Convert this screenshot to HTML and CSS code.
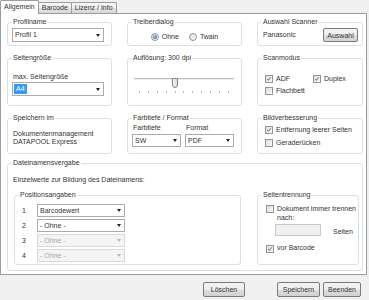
FILE: index.html
```html
<!DOCTYPE html>
<html>
<head>
    <title>Allgemein</title>
<link rel="stylesheet" href="styles.css">
</head>
<body>
<div class="window">
    <div class="tabs">
        <div class="tab active">Allgemein</div>
        <div class="tab">Barcode</div>
        <div class="tab">Lizenz / Info</div>
    </div>

    <div class="page">
        <div class="grid">
            <fieldset class="grp">
                <legend>Profilname</legend>
                <div class="combo wide"><span>Profil 1</span><i class="arrow"></i></div>
            </fieldset>

            <fieldset class="grp">
                <legend>Treiberdialog</legend>
                <div class="radios">
                    <span class="opt"><span class="rb on"></span>Ohne</span>
                    <span class="opt"><span class="rb"></span>Twain</span>
                </div>
            </fieldset>

            <fieldset class="grp">
                <legend>Auswahl Scanner</legend>
                <div class="scanner">
                    <span>Panasonic</span>
                    <button class="btn select">Auswahl</button>
                </div>
            </fieldset>

            <fieldset class="grp">
                <legend>Seitengröße</legend>
                <div class="label size-label">max. Seitengröße</div>
                <div class="combo wide"><span class="selected">A4</span><i class="arrow"></i></div>
            </fieldset>

            <fieldset class="grp">
                <legend>Auflösung: 300 dpi</legend>
                <div class="slider">
                    <div class="track"></div>
                    <div class="thumb"></div>
                </div>
                <div class="ticks">
                    <i></i><i></i><i></i><i></i><i></i><i></i><i></i><i></i><i></i><i></i><i></i>
                </div>
            </fieldset>

            <fieldset class="grp">
                <legend>Scanmodus</legend>
                <div class="checks">
                    <div class="check-row">
                        <span class="opt first"><span class="cb on"><svg viewBox="0 0 8 8"><path d="M1.6 4.1 3.2 5.8 6.4 1.8"/></svg></span>ADF</span>
                        <span class="opt"><span class="cb on"><svg viewBox="0 0 8 8"><path d="M1.6 4.1 3.2 5.8 6.4 1.8"/></svg></span>Duplex</span>
                    </div>
                    <div class="check-row">
                        <span class="opt"><span class="cb"></span>Flachbett</span>
                    </div>
                </div>
            </fieldset>

            <fieldset class="grp">
                <legend>Speichern im</legend>
                <div class="store">Dokumentenmanagement<br>DATAPOOL Express</div>
            </fieldset>

            <fieldset class="grp">
                <legend>Farbtiefe / Format</legend>
                <div class="format">
                    <div>
                        <div class="label">Farbtiefe</div>
                        <div class="combo half"><span>SW</span><i class="arrow"></i></div>
                    </div>
                    <div>
                        <div class="label">Format</div>
                        <div class="combo half"><span>PDF</span><i class="arrow"></i></div>
                    </div>
                </div>
            </fieldset>

            <fieldset class="grp">
                <legend>Bildverbesserung</legend>
                <div class="checks improve">
                    <div class="check-row">
                        <span class="opt"><span class="cb on"><svg viewBox="0 0 8 8"><path d="M1.6 4.1 3.2 5.8 6.4 1.8"/></svg></span>Entfernung leerer Seiten</span>
                    </div>
                    <div class="check-row">
                        <span class="opt"><span class="cb"></span>Geraderücken</span>
                    </div>
                </div>
            </fieldset>
        </div>

        <fieldset class="grp names">
            <legend>Dateinamensvergabe</legend>
            <div class="label">Einzelwerte zur Bildung des Dateinamens:</div>
            <div class="names-row">
                <fieldset class="grp positions">
                    <legend>Positionsangaben</legend>
                    <div class="pos-grid">
                        <span class="num">1</span>
                        <div class="combo pos"><span>Barcodewert</span><i class="arrow"></i></div>
                        <span class="num">2</span>
                        <div class="combo pos"><span>- Ohne -</span><i class="arrow"></i></div>
                        <span class="num">3</span>
                        <div class="combo pos disabled"><span>- Ohne -</span><i class="arrow"></i></div>
                        <span class="num">4</span>
                        <div class="combo pos disabled"><span>- Ohne -</span><i class="arrow"></i></div>
                    </div>
                </fieldset>

                <fieldset class="grp split">
                    <legend>Seitentrennung</legend>
                    <div class="split-row">
                        <span class="cb"></span>
                        <span class="split-text">Dokument immer trennen<br>nach:</span>
                    </div>
                    <div class="pages-row">
                        <span class="pages-input"></span>
                        <span>Seiten</span>
                    </div>
                    <div class="split-row barcode">
                        <span class="cb on"><svg viewBox="0 0 8 8"><path d="M1.6 4.1 3.2 5.8 6.4 1.8"/></svg></span>
                        <span>vor Barcode</span>
                    </div>
                </fieldset>
            </div>
        </fieldset>
    </div>

    <div class="footer">
        <button class="btn delete">Löschen</button>
        <button class="btn save">Speichern</button>
        <button class="btn close">Beenden</button>
    </div>
</div>
</body>
</html>
```

FILE: styles.css
```css
body {
    margin: 0;
    font-family: "Liberation Sans", Arial, sans-serif;
    font-size: 7px;
    line-height: 8px;
    color: #333;
    background: #f0f0f0;
}

.window {
    width: 369px;
    height: 300px;
}

/* Reiter */
.tabs {
    display: flex;
    align-items: flex-end;
    height: 13px;
}

.tab {
    height: 10px;
    line-height: 10px;
    padding: 0 3px;
    border: 1px solid #9a9ca3;
    border-bottom: none;
    border-radius: 2px 2px 0 0;
    background: linear-gradient(#f6f6f6, #eeeeee 50%, #e3e3e3 50%, #d8d8d8);
    margin-right: -1px;
}

.tab.active {
    height: 13px;
    line-height: 12px;
    background: #fff;
    position: relative;
    z-index: 1;
    margin-bottom: -1px;
}

.page {
    box-sizing: border-box;
    width: 367px;
    height: 262px;
    border: 1px solid #9a9ca3;
    background: #fff;
    padding: 4px 0 0 6px;
}

.grid {
    display: grid;
    grid-template-columns: 105px 115px 106px;
    grid-template-rows: 28px 52px 40px;
    column-gap: 15px;
    row-gap: 8px;
}

/* Gruppen */
.grp {
    margin: 0;
    padding: 2px 4px 0;
    border: 1px solid #d9e1e6;
    border-radius: 3px;
    min-width: 0;
}

.grp legend {
    padding: 0 1px;
    line-height: 8px;
}

.label {
    padding-left: 1px;
}

/* Kombinationsfelder */
.combo {
    display: flex;
    align-items: center;
    justify-content: space-between;
    box-sizing: border-box;
    height: 14px;
    border: 1px solid #ababab;
    background: #fff;
    padding: 0 3px 0 2px;
}

.combo.wide {
    width: 92px;
}

.combo.half {
    width: 49px;
    height: 13px;
    margin-top: 2px;
}

.combo.pos {
    width: 88px;
    height: 13px;
}

.combo.disabled {
    background: #f4f4f4;
    border-color: #d9d9d9;
    color: #a8a8a8;
}

.arrow {
    width: 0;
    height: 0;
    border-left: 2.5px solid transparent;
    border-right: 2.5px solid transparent;
    border-top: 3px solid #222;
}

.combo.disabled .arrow {
    border-top-color: #b8b8b8;
}

.selected {
    background: #3399ff;
    color: #fff;
    padding: 1px 2px;
    margin-left: -1px;
}

/* Optionsfelder und Kontrollkästchen */
.opt {
    display: flex;
    align-items: center;
}

.rb {
    box-sizing: border-box;
    width: 8px;
    height: 8px;
    border: 1px solid #959595;
    border-radius: 50%;
    background: linear-gradient(135deg, #dadada, #fafafa);
    margin-right: 3px;
    display: flex;
    align-items: center;
    justify-content: center;
}

.rb.on::after {
    content: "";
    width: 4px;
    height: 4px;
    border-radius: 50%;
    background: radial-gradient(circle at 40% 35%, #8fc2f5, #1f5fb5);
}

.cb {
    box-sizing: border-box;
    flex: none;
    width: 8px;
    height: 8px;
    border: 1px solid #959595;
    background: linear-gradient(135deg, #dcdcdc, #fbfbfb);
    margin-right: 3px;
    display: flex;
}

.cb svg {
    width: 6px;
    height: 6px;
    fill: none;
    stroke: #4a5e9e;
    stroke-width: 1.3;
}

.radios {
    display: flex;
    justify-content: center;
    gap: 10px;
    margin-top: 5px;
}

.scanner {
    display: flex;
    justify-content: space-between;
    align-items: center;
    padding-left: 1px;
}

.size-label {
    margin-top: 9px;
    margin-bottom: 1px;
}

/* Schieberegler */
.slider {
    position: relative;
    height: 10px;
    width: 100px;
    margin: 14px 0 0 2px;
}

.track {
    margin-top: 4px;
    height: 1px;
    border-top: 1px solid #bdbdbd;
    background: #ececec;
}

.thumb {
    position: absolute;
    left: 38px;
    top: 0;
    box-sizing: border-box;
    width: 6px;
    height: 10px;
    border: 1px solid #808080;
    border-radius: 1px 1px 3px 3px;
    background: linear-gradient(90deg, #f6f6f6, #dadada);
}

.ticks {
    display: flex;
    justify-content: space-between;
    width: 90px;
    margin: 3px 0 0 7px;
}

.ticks i {
    width: 1px;
    height: 2px;
    background: #b4b4b4;
}

.checks {
    margin-top: 11px;
    padding-left: 3px;
}

.check-row {
    display: flex;
    margin-bottom: 4px;
}

.check-row .first {
    width: 48px;
}

.checks.improve {
    margin-top: 2px;
}

.checks.improve .check-row {
    margin-bottom: 5px;
}

.store {
    margin-top: 6px;
    padding-left: 1px;
}

.format {
    display: flex;
    gap: 4px;
}

/* Dateinamensvergabe */
.names {
    margin-top: 5px;
    width: 356px;
    box-sizing: border-box;
    padding: 9px 3px 5px 4px;
}

.names-row {
    display: flex;
    justify-content: space-between;
    margin-top: 7px;
}

.positions {
    width: 227px;
    box-sizing: border-box;
    height: 74px;
    margin-left: 2px;
    padding-top: 5px;
}

.pos-grid {
    display: grid;
    grid-template-columns: 18px 88px;
    row-gap: 2px;
    align-items: center;
}

.num {
    padding-left: 3px;
}

.split {
    width: 102px;
    box-sizing: border-box;
    height: 74px;
    padding: 5px 0 0 4px;
}

.split-row {
    display: flex;
    align-items: flex-start;
    padding-left: 4px;
}

.split-row .cb {
    margin-top: 1px;
}

.split-text {
    white-space: nowrap;
    line-height: 9px;
}

.pages-row {
    display: flex;
    align-items: flex-end;
    gap: 12px;
    margin: 2px 0 0 13px;
}

.pages-input {
    box-sizing: border-box;
    width: 46px;
    height: 12px;
    border: 1px solid #c8c8c8;
    background: #f0f0f0;
}

.split-row.barcode {
    margin-top: 8px;
}

/* Schaltflächen */
.btn {
    box-sizing: border-box;
    height: 15px;
    padding: 0;
    font-family: "Liberation Sans", Arial, sans-serif;
    font-size: 7px;
    color: #333;
    border: 1px solid #7a7a7a;
    border-radius: 2px;
    background: linear-gradient(#f3f3f3, #ececec 50%, #dedede 50%, #d2d2d2);
}

.btn.select {
    width: 35px;
    height: 14px;
}

.footer {
    display: flex;
    justify-content: flex-end;
    padding: 7px 8px 0 0;
}

.btn.delete {
    width: 42px;
    margin-right: 32px;
}

.btn.save {
    width: 43px;
    margin-right: 3px;
}

.btn.close {
    width: 38px;
}
```
